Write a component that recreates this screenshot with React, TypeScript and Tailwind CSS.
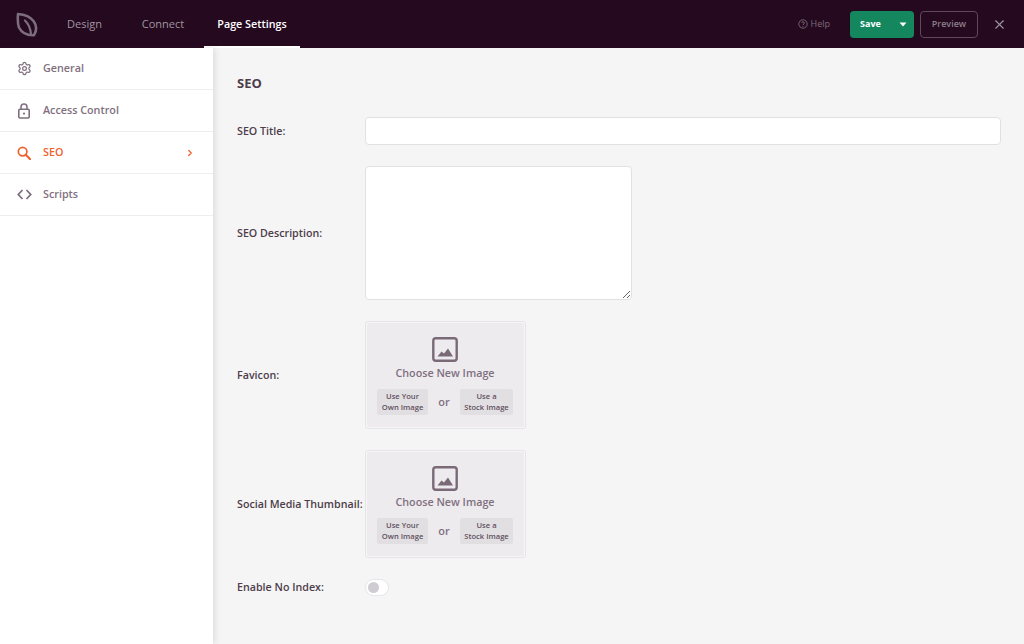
import React from 'react'
import { Settings, ChevronRight, X } from 'lucide-react'

const font = { fontFamily: '"Open Sans", sans-serif' }

function Logo() {
  return (
    <svg width="22" height="25" viewBox="0 0 22 25" fill="none" stroke="#7d6c7b" strokeLinejoin="round" strokeLinecap="round" className="flex-shrink-0">
      <path d="M2 2 C8 2.5 14 4.5 17.5 9 C20.5 13 20.8 18.5 18 23.2 C11 23.5 5.5 20.5 3 15.5 C1.6 12 1.6 7 2 2 Z" strokeWidth="2.6" />
      <path d="M9 8.5 C12.5 12 14.5 17 15 22" strokeWidth="2.2" />
    </svg>
  )
}

function LockIcon() {
  return (
    <svg width="14" height="16" viewBox="0 0 14 16" fill="none" stroke="currentColor" strokeWidth="1.6">
      <rect x="1.8" y="6.3" width="10.4" height="8.7" rx="1" />
      <path d="M4 6.3 V4 C4 2.3 5.3 1 7 1 C8.7 1 10 2.3 10 4 V6.3" />
      <circle cx="7" cy="10.6" r="1.1" fill="currentColor" stroke="none" />
    </svg>
  )
}

function SearchIcon() {
  return (
    <svg width="14" height="14" viewBox="0 0 14 14" fill="none" stroke="currentColor">
      <circle cx="5.6" cy="5.6" r="4.3" strokeWidth="1.7" />
      <path d="M8.8 8.8 L13 13" strokeWidth="2.1" strokeLinecap="round" />
    </svg>
  )
}

function CodeIcon() {
  return (
    <svg width="15" height="11" viewBox="0 0 15 11" fill="none" stroke="currentColor" strokeWidth="1.8">
      <path d="M5.5 1 L1.3 5.5 L5.5 10" />
      <path d="M9.5 1 L13.7 5.5 L9.5 10" />
    </svg>
  )
}

function SideItem({ icon, label, active }: { icon: React.ReactNode; label: string; active?: boolean }) {
  return (
    <div className={`h-[42px] flex items-center pl-[17px] pr-[18px] border-b border-[#eeedef] text-[10.75px] font-semibold ${active ? 'text-[#f0612d]' : 'text-[#7f7080]'}`}>
      <span className="w-[26px] flex-shrink-0 flex items-center">{icon}</span>
      <span className="flex-1">{label}</span>
      {active && <ChevronRight size={10} strokeWidth={3} />}
    </div>
  )
}

function ImagePicker() {
  return (
    <div className="w-[161px] h-[108px] p-[1px] rounded-[3px] border border-[#e6e4e8] bg-[#f7f6f7]">
      <div className="h-full bg-[#eeebee] flex flex-col items-center pt-[14px] pl-[10px] pr-[11px] rounded-[2px]">
        <svg width="26" height="25" viewBox="0 0 26 25" fill="none" className="flex-shrink-0">
          <rect x="1.3" y="1.3" width="23.4" height="22.4" rx="2.5" stroke="#7a6a78" strokeWidth="2.4" />
          <path d="M5.5 19.5 L9.5 14.5 L12 16.5 L16 11.5 L21 19.5 Z" fill="#7a6a78" />
        </svg>
        <div className="mt-[3px] text-[10.75px] leading-[16px] text-[#7f7080] font-semibold">Choose New Image</div>
        <div className="mt-[8px] w-full flex items-center justify-between">
          <div className="w-[51px] h-[26px] rounded-[2px] bg-[#e2dfe2] flex items-center justify-center text-center text-[7.6px] leading-[11px] font-semibold text-[#5f4f5e]">
            Use Your<br />Own Image
          </div>
          <span className="text-[11px] font-semibold text-[#7f7080]">or</span>
          <div className="w-[53px] h-[26px] rounded-[2px] bg-[#e2dfe2] flex items-center justify-center text-center text-[7.6px] leading-[11px] font-semibold text-[#5f4f5e]">
            Use a<br />Stock Image
          </div>
        </div>
      </div>
    </div>
  )
}

function Row({ label, children, className }: { label: string; children: React.ReactNode; className?: string }) {
  return (
    <div className={`flex items-center ${className ?? ''}`}>
      <label className="w-[128px] flex-shrink-0 text-[10.7px] font-semibold text-[#4d3d4b] whitespace-nowrap">{label}</label>
      {children}
    </div>
  )
}

export default function App() {
  return (
    <div className="w-[1024px] h-[644px] overflow-hidden flex flex-col bg-[#f5f5f5]" style={font}>
      {/* Top bar */}
      <header className="h-[48px] flex-shrink-0 bg-[#24091f] flex items-center pl-[16px] pr-[17px]">
        <Logo />
        <nav className="flex h-full ml-[17px] text-[11px] font-medium">
          <div className="w-[59px] flex items-center justify-center text-[#a196a0]">Design</div>
          <div className="w-[90px] pl-[8px] flex items-center justify-center text-[#a196a0]">Connect</div>
          <div className="w-[96px] flex items-center justify-center text-[10.75px] font-semibold text-white border-b-2 border-white pt-[2px]">Page Settings</div>
        </nav>
        <div className="flex-1" />
        <div className="flex items-center gap-[3px] text-[9px] font-medium text-[#7d6c7b] mr-[20px]">
          <svg width="10" height="10" viewBox="0 0 10 10" fill="none" stroke="currentColor" strokeWidth="0.9">
            <circle cx="5" cy="5" r="4.2" />
            <path d="M3.7 4 C3.7 2.4 6.4 2.4 6.4 4 C6.4 5 5 5 5 6.1" />
            <circle cx="5" cy="7.5" r="0.5" fill="currentColor" stroke="none" />
          </svg>
          Help
        </div>
        <div className="w-[64px] h-[27px] rounded-[4px] bg-[#14875f] flex items-center pl-[10px] pr-[7px] justify-between text-[9px] font-bold text-white">
          Save
          <svg width="8" height="5" viewBox="0 0 8 5"><path d="M0.5 0.5 H7.5 L4 4.5 Z" fill="#fff" /></svg>
        </div>
        <div className="ml-[6px] w-[58px] h-[27px] rounded-[4px] border border-[#5e4a5b] flex items-center justify-center text-[9px] font-semibold text-[#8c7f8a]">
          Preview
        </div>
        <X size={15} strokeWidth={1.7} className="ml-[14px] text-[#a196a0]" />
      </header>

      <div className="flex-1 flex min-h-0">
        {/* Sidebar */}
        <aside className="w-[213px] flex-shrink-0 bg-white shadow-[2px_0_6px_rgba(60,50,70,0.12)]">
          <SideItem icon={<Settings size={15} strokeWidth={2} />} label="General" />
          <SideItem icon={<LockIcon />} label="Access Control" />
          <SideItem icon={<SearchIcon />} label="SEO" active />
          <SideItem icon={<CodeIcon />} label="Scripts" />
        </aside>

        {/* Main form */}
        <main className="flex-1 pl-[24px] pr-[23px] pt-[26px]">
          <h1 className="text-[13px] leading-[18px] font-bold text-[#4d3d4b] mb-[25px]">SEO</h1>
          <Row label="SEO Title:" className="mb-[21px]">
            <input className="flex-1 h-[28px] bg-white rounded-[4px] border border-[#e2e0e4] outline-none" />
          </Row>
          <Row label="SEO Description:" className="mb-[21px]">
            <textarea className="block w-[267px] h-[134px] bg-white rounded-[4px] border border-[#e2e0e4] outline-none" />
          </Row>
          <Row label="Favicon:" className="mb-[21px]">
            <ImagePicker />
          </Row>
          <Row label="Social Media Thumbnail:" className="mb-[21px]">
            <ImagePicker />
          </Row>
          <Row label="Enable No Index:">
            <div className="w-[24px] h-[17px] rounded-full bg-white border border-[#e6e4e8] flex items-center pl-[2px]">
              <div className="w-[11px] h-[11px] rounded-full bg-[#cfccd4]" />
            </div>
          </Row>
        </main>
      </div>
    </div>
  )
}
